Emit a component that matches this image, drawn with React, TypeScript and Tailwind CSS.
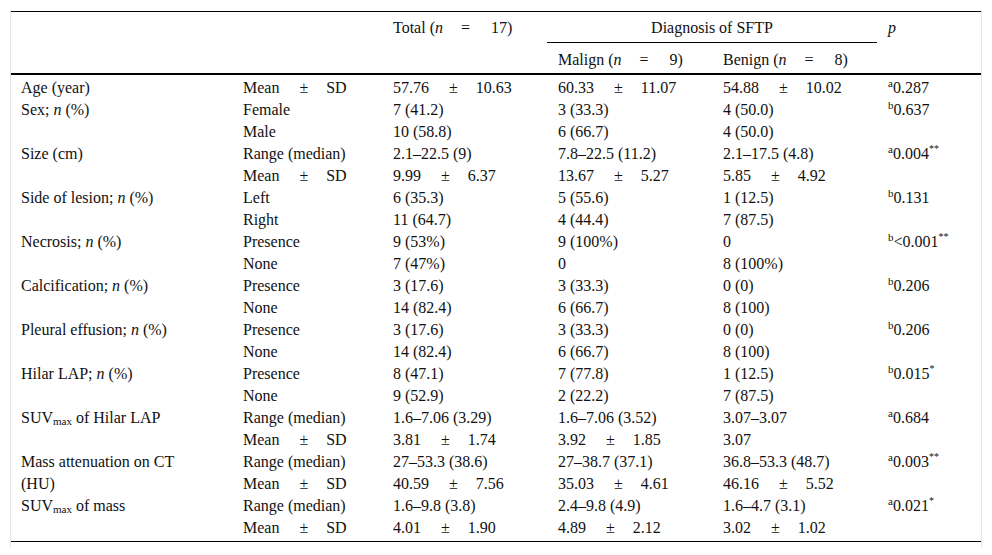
import React from "react";

type Row = {
  label?: React.ReactNode;
  span?: number;
  stat: React.ReactNode;
  total: React.ReactNode;
  malign: React.ReactNode;
  benign: React.ReactNode;
  p?: React.ReactNode;
};

const PM = ({ a, b }: { a: string; b: string }) => (
  <span>
    {a}
    <span className="ml-[20px] mr-[18px]">±</span>
    {b}
  </span>
);

const N = ({ pre, n }: { pre: string; n: string }) => (
  <span>
    {pre} (<i>n</i>
    <span className="ml-[18px] mr-[21px]">=</span>
    {n})
  </span>
);

const P = ({ s, v, star }: { s: string; v: string; star?: string }) => (
  <span>
    <sup className="text-[11px]">{s}</sup>
    {v}
    {star && <sup className="text-[10px] -top-[0.7em]">{star}</sup>}
  </span>
);

const Pct = ({ t }: { t: string }) => (
  <span>
    {t}; <i>n</i> (%)
  </span>
);

const Suv = ({ rest }: { rest: string }) => (
  <span>
    SUV<sub className="text-[11px]">max</sub> {rest}
  </span>
);

const rows: Row[] = [
  { label: "Age (year)", stat: <PM a="Mean" b="SD" />, total: <PM a="57.76" b="10.63" />, malign: <PM a="60.33" b="11.07" />, benign: <PM a="54.88" b="10.02" />, p: <P s="a" v="0.287" /> },
  { label: <Pct t="Sex" />, stat: "Female", total: "7 (41.2)", malign: "3 (33.3)", benign: "4 (50.0)", p: <P s="b" v="0.637" /> },
  { stat: "Male", total: "10 (58.8)", malign: "6 (66.7)", benign: "4 (50.0)" },
  { label: "Size (cm)", stat: "Range (median)", total: "2.1–22.5 (9)", malign: "7.8–22.5 (11.2)", benign: "2.1–17.5 (4.8)", p: <P s="a" v="0.004" star="**" /> },
  { stat: <PM a="Mean" b="SD" />, total: <PM a="9.99" b="6.37" />, malign: <PM a="13.67" b="5.27" />, benign: <PM a="5.85" b="4.92" /> },
  { label: <Pct t="Side of lesion" />, stat: "Left", total: "6 (35.3)", malign: "5 (55.6)", benign: "1 (12.5)", p: <P s="b" v="0.131" /> },
  { stat: "Right", total: "11 (64.7)", malign: "4 (44.4)", benign: "7 (87.5)" },
  { label: <Pct t="Necrosis" />, stat: "Presence", total: "9 (53%)", malign: "9 (100%)", benign: "0", p: <P s="b" v="<0.001" star="**" /> },
  { stat: "None", total: "7 (47%)", malign: "0", benign: "8 (100%)" },
  { label: <Pct t="Calcification" />, stat: "Presence", total: "3 (17.6)", malign: "3 (33.3)", benign: "0 (0)", p: <P s="b" v="0.206" /> },
  { stat: "None", total: "14 (82.4)", malign: "6 (66.7)", benign: "8 (100)" },
  { label: <Pct t="Pleural effusion" />, stat: "Presence", total: "3 (17.6)", malign: "3 (33.3)", benign: "0 (0)", p: <P s="b" v="0.206" /> },
  { stat: "None", total: "14 (82.4)", malign: "6 (66.7)", benign: "8 (100)" },
  { label: <Pct t="Hilar LAP" />, stat: "Presence", total: "8 (47.1)", malign: "7 (77.8)", benign: "1 (12.5)", p: <P s="b" v="0.015" star="*" /> },
  { stat: "None", total: "9 (52.9)", malign: "2 (22.2)", benign: "7 (87.5)" },
  { label: <Suv rest="of Hilar LAP" />, stat: "Range (median)", total: "1.6–7.06 (3.29)", malign: "1.6–7.06 (3.52)", benign: "3.07–3.07", p: <P s="a" v="0.684" /> },
  { stat: <PM a="Mean" b="SD" />, total: <PM a="3.81" b="1.74" />, malign: <PM a="3.92" b="1.85" />, benign: "3.07" },
  {
    label: (
      <>
        <div className="h-[22px]">Mass attenuation on CT</div>
        <div>(HU)</div>
      </>
    ),
    span: 2,
    stat: "Range (median)",
    total: "27–53.3 (38.6)",
    malign: "27–38.7 (37.1)",
    benign: "36.8–53.3 (48.7)",
    p: <P s="a" v="0.003" star="**" />,
  },
  { stat: <PM a="Mean" b="SD" />, total: <PM a="40.59" b="7.56" />, malign: <PM a="35.03" b="4.61" />, benign: <PM a="46.16" b="5.52" /> },
  { label: <Suv rest="of mass" />, stat: "Range (median)", total: "1.6–9.8 (3.8)", malign: "2.4–9.8 (4.9)", benign: "1.6–4.7 (3.1)", p: <P s="a" v="0.021" star="*" /> },
  { stat: <PM a="Mean" b="SD" />, total: <PM a="4.01" b="1.90" />, malign: <PM a="4.89" b="2.12" />, benign: <PM a="3.02" b="1.02" /> },
];

const td = "p-0 pl-[11px] pt-[3px] h-[19px] leading-[19px] align-top whitespace-nowrap";

export default function App() {
  return (
    <div className="w-[992px] h-[555px] bg-white pt-[10px]">
      <div className="ml-[10px] w-[972px] border-x border-[#e3e3e3] pt-px pb-[5px] text-[16px] leading-[22px] text-[#111] font-['Liberation_Serif',serif]">
        <table className="w-[970px] table-fixed border-b border-black">
          <colgroup>
            <col className="w-[221px]" />
            <col className="w-[150px]" />
            <col className="w-[165px]" />
            <col className="w-[165px]" />
            <col className="w-[165px]" />
            <col className="w-[104px]" />
          </colgroup>
          <thead>
            <tr className="border-t border-black">
              <th rowSpan={2} />
              <th rowSpan={2} />
              <th rowSpan={2} className="p-0 pl-[11px] pt-[5px] align-top text-left font-normal whitespace-nowrap">
                <N pre="Total" n="17" />
              </th>
              <th colSpan={2} className="p-0 pt-[5px] pb-[3px] h-[31px] align-top text-center font-normal border-b border-black">
                Diagnosis of SFTP
              </th>
              <th rowSpan={2} className="p-0 pl-[11px] pt-[5px] align-top text-left font-normal">
                <i>p</i>
              </th>
            </tr>
            <tr className="border-b-2 border-black">
              <th className="p-0 pl-[11px] pt-[6px] h-[31px] align-top text-left font-normal whitespace-nowrap">
                <N pre="Malign" n="9" />
              </th>
              <th className="p-0 pl-[11px] pt-[6px] h-[31px] align-top text-left font-normal whitespace-nowrap">
                <N pre="Benign" n="8" />
              </th>
            </tr>
          </thead>
          <tbody>
            {rows.map((r, i) => (
              <tr key={i}>
                {r.label !== undefined && (
                  <td rowSpan={r.span} className="p-0 pl-[10px] pt-[3px] leading-[19px] align-top pr-[40px]">
                    {r.label}
                  </td>
                )}
                {r.label === undefined && !(i > 0 && rows[i - 1].span) && <td className={td} />}
                <td className={td}>{r.stat}</td>
                <td className={td}>{r.total}</td>
                <td className={td}>{r.malign}</td>
                <td className={td}>{r.benign}</td>
                <td className={td}>{r.p}</td>
              </tr>
            ))}
            <tr>
              <td colSpan={6} className="h-[5px] p-0" />
            </tr>
          </tbody>
        </table>
      </div>
    </div>
  );
}
